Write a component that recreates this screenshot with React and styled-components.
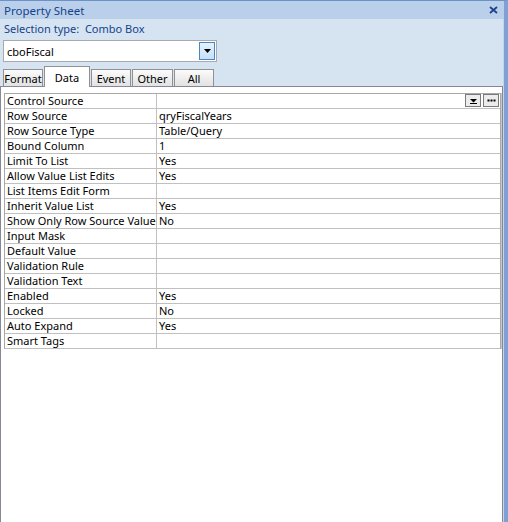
import React from "react";
import styled, { createGlobalStyle } from "styled-components";

const Global = createGlobalStyle`
  html, body { margin: 0; padding: 0; background: #d6e4f2; }
  body { font-family: "Noto Sans", "Open Sans", sans-serif; font-size: 11px; }
  * { box-sizing: border-box; }
`;

const Frame = styled.div`
  width: 508px;
  height: 522px;
  display: flex;
  flex-direction: column;
  background: #d6e4f2;
  border-top: 1px solid #6b91c9;
  border-right: 4px solid #7ea0d4;
  box-shadow: inset -1px 0 0 #c4d6ec;
  overflow: hidden;
`;

const TitleBar = styled.div`
  height: 18px;
  flex: none;
  display: flex;
  align-items: center;
  justify-content: space-between;
  padding: 0 6px 0 4px;
  background: #bad0ea;
  color: #15428b;
  font-size: 11.5px;
`;

const CloseBtn = styled.svg`
  width: 9px;
  height: 8px;
  display: block;
`;

const SelectionLine = styled.div`
  height: 18px;
  flex: none;
  display: flex;
  align-items: center;
  padding-left: 4px;
  color: #15428b;
  white-space: pre;
`;

const Combo = styled.div`
  flex: none;
  margin: 3px 0 0 3px;
  width: 214px;
  height: 22px;
  background: #fff;
  border: 1px solid #a7abb0;
  display: flex;
  align-items: center;
  justify-content: space-between;
  padding: 0 1px 0 3px;
  color: #000;
`;

const ComboButton = styled.div`
  width: 16px;
  height: 18px;
  border: 1px solid #4a87c0;
  background: linear-gradient(#e6f2fc, #c5e0f7);
  display: flex;
  align-items: center;
  justify-content: center;
`;

const Arrow = styled.svg`
  width: 7px;
  height: 4px;
  display: block;
`;

const TabRow = styled.div`
  flex: none;
  margin: 4px 0 0 3px;
  height: 20px;
  display: flex;
  align-items: flex-end;
  gap: 1px;
  position: relative;
  z-index: 1;
`;

const Tab = styled.div`
  width: ${(p) => p.$w}px;
  height: ${(p) => (p.$active ? 21 : 17)}px;
  margin-bottom: ${(p) => (p.$active ? -1 : 0)}px;
  border: 1px solid #919191;
  border-bottom: none;
  background: ${(p) =>
    p.$active ? "#ffffff" : "linear-gradient(#fbfbfb, #e2e2e2)"};
  display: flex;
  align-items: ${(p) => (p.$active ? "flex-start" : "center")};
  padding-top: ${(p) => (p.$active ? 3 : 1)}px;
  justify-content: center;
  color: #000;
  font-size: 11px;
  white-space: nowrap;
  overflow: hidden;
`;

const Panel = styled.div`
  flex: 1;
  background: #fff;
  border: 1px solid #868898;
  border-bottom: none;
  margin-right: 1px;
  padding: 6px 1px 0 3px;
`;

const Grid = styled.div`
  border: 1px solid #a8a8a8;
  border-bottom: none;
  box-shadow: 1px 0 0 #c8c8c8;
`;

const Row = styled.div`
  display: grid;
  grid-template-columns: 152px 1fr;
  height: 15px;
  border-bottom: 1px solid #c0c0c0;
`;

const Label = styled.div`
  border-right: 1px solid #c0c0c0;
  padding-left: 2px;
  line-height: 14px;
  white-space: nowrap;
  overflow: hidden;
  color: #000;
`;

const Value = styled.div`
  padding-left: 2px;
  line-height: 14px;
  white-space: nowrap;
  color: #000;
  display: flex;
  justify-content: space-between;
  align-items: flex-start;
`;

const MiniButtons = styled.div`
  display: flex;
  gap: 2px;
  margin-right: 1px;
`;

const MiniButton = styled.div`
  width: 16px;
  height: 13px;
  border: 1px solid #7a7a7a;
  background: #ececec;
  display: flex;
  align-items: center;
  justify-content: center;
`;

const rows = [
  ["Control Source", "", true],
  ["Row Source", "qryFiscalYears"],
  ["Row Source Type", "Table/Query"],
  ["Bound Column", "1"],
  ["Limit To List", "Yes"],
  ["Allow Value List Edits", "Yes"],
  ["List Items Edit Form", ""],
  ["Inherit Value List", "Yes"],
  ["Show Only Row Source Values", "No"],
  ["Input Mask", ""],
  ["Default Value", ""],
  ["Validation Rule", ""],
  ["Validation Text", ""],
  ["Enabled", "Yes"],
  ["Locked", "No"],
  ["Auto Expand", "Yes"],
  ["Smart Tags", ""],
];

const tabs = [
  ["Format", 40],
  ["Data", 46, true],
  ["Event", 40],
  ["Other", 41],
  ["All", 40],
];

export default function App() {
  return (
    <>
      <Global />
      <Frame>
        <TitleBar>
          <span>Property Sheet</span>
          <CloseBtn viewBox="0 0 9 8">
            <path d="M1 1 L8 7 M8 1 L1 7" stroke="#1d428f" strokeWidth="1.8" />
          </CloseBtn>
        </TitleBar>
        <SelectionLine>Selection type:  Combo Box</SelectionLine>
        <Combo>
          <span>cboFiscal</span>
          <ComboButton>
            <Arrow viewBox="0 0 7 4">
              <path d="M0 0 H7 L3.5 4 Z" fill="#000" />
            </Arrow>
          </ComboButton>
        </Combo>
        <TabRow>
          {tabs.map(([t, w, a]) => (
            <Tab key={t} $w={w} $active={a}>
              {t}
            </Tab>
          ))}
        </TabRow>
        <Panel>
          <Grid>
            {rows.map(([l, v, btn]) => (
              <Row key={l}>
                <Label>{l}</Label>
                <Value>
                  <span>{v}</span>
                  {btn && (
                    <MiniButtons>
                      <MiniButton>
                        <svg width="9" height="7" viewBox="0 0 9 7">
                          <path d="M1 2 H8 L4.5 5.5 Z" fill="#000" />
                          <path d="M1 6.5 H8" stroke="#000" strokeWidth="1" />
                        </svg>
                      </MiniButton>
                      <MiniButton>
                        <svg width="9" height="3" viewBox="0 0 9 3">
                          <rect x="0.5" y="0.5" width="2" height="2" fill="#000" />
                          <rect x="3.5" y="0.5" width="2" height="2" fill="#000" />
                          <rect x="6.5" y="0.5" width="2" height="2" fill="#000" />
                        </svg>
                      </MiniButton>
                    </MiniButtons>
                  )}
                </Value>
              </Row>
            ))}
          </Grid>
        </Panel>
      </Frame>
    </>
  );
}
